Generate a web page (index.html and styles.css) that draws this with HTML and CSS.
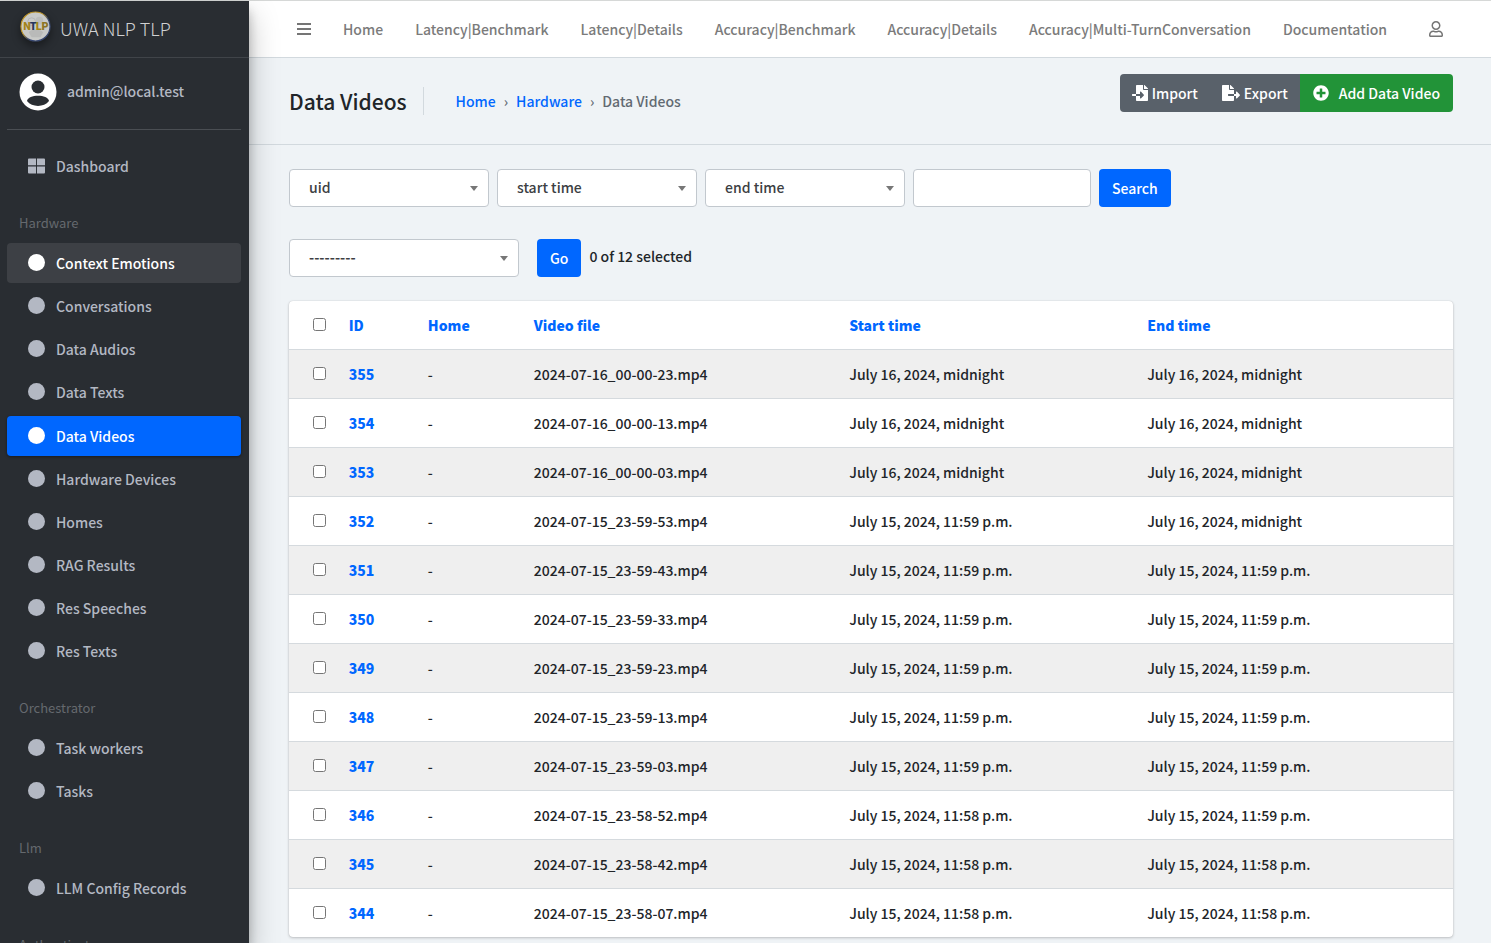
FILE: index.html
```html
<!DOCTYPE html>
<html lang="en">
<head>
<meta charset="utf-8">
<title>Data Videos | UWA NLP TLP</title>
<link rel="stylesheet" href="styles.css">
</head>
<body>
<div class="app">
  <aside class="sidebar">
    <a class="brand" href="#">
      <svg class="brand-logo" viewBox="0 0 32 32" aria-hidden="true">
        <defs><linearGradient id="ring" x1="0" y1="0" x2="1" y2="1"><stop offset="0.4" stop-color="#bd9427"/><stop offset="0.6" stop-color="#36466f"/></linearGradient></defs>
        <circle cx="16" cy="16" r="15" fill="#c9cac8" stroke="url(#ring)" stroke-width="1.2"/>
        <circle cx="12" cy="11" r="4" fill="none" stroke="#b5b6b5"/>
        <circle cx="20" cy="10" r="4" fill="#bcbdbb"/>
        <path d="M9 22c2-4 12-4 15 0l-3 5H12z" fill="#b9bab9"/>
        <g class="logo-text"><text x="3" y="20" fill="#a48418">N</text><text x="10" y="20" fill="#26365f">T</text><text x="16" y="20" fill="#a48418">L</text><text x="22" y="20" fill="#8c7423">P</text></g>
      </svg>
      <span>UWA NLP TLP</span>
    </a>
    <div class="sidebar-body">
      <div class="user-panel">
        <svg class="avatar" viewBox="0 0 38 38" aria-hidden="true">
          <circle cx="19" cy="19" r="18.500" fill="#fff"/>
          <circle cx="19" cy="14" r="6.500" fill="#292d32"/>
          <path d="M8 28c1-7 21-7 22 0-5 6.500-17 6.500-22 0z" fill="#292d32"/>
        </svg>
        <a href="#">admin@local.test</a>
      </div>
      <nav class="menu">
        <a class="item" href="#"><svg class="grid-icon" viewBox="0 0 18 16" aria-hidden="true"><path d="M1 0h7.500v7.300H0V1a1 1 0 0 1 1-1zM9.500 0H17a1 1 0 0 1 1 1v6.300H9.500zM0 8.500h8.500V16H1a1 1 0 0 1-1-1zM9.500 8.500H18V15a1 1 0 0 1-1 1H9.500z"/></svg>Dashboard</a>
        <h2 class="section">Hardware</h2>
        <a class="item hovered" href="#"><i class="dot"></i>Context Emotions</a>
        <a class="item" href="#"><i class="dot"></i>Conversations</a>
        <a class="item" href="#"><i class="dot"></i>Data Audios</a>
        <a class="item" href="#"><i class="dot"></i>Data Texts</a>
        <a class="item active" href="#"><i class="dot"></i>Data Videos</a>
        <a class="item" href="#"><i class="dot"></i>Hardware Devices</a>
        <a class="item" href="#"><i class="dot"></i>Homes</a>
        <a class="item" href="#"><i class="dot"></i>RAG Results</a>
        <a class="item" href="#"><i class="dot"></i>Res Speeches</a>
        <a class="item" href="#"><i class="dot"></i>Res Texts</a>
        <h2 class="section">Orchestrator</h2>
        <a class="item" href="#"><i class="dot"></i>Task workers</a>
        <a class="item" href="#"><i class="dot"></i>Tasks</a>
        <h2 class="section">Llm</h2>
        <a class="item" href="#"><i class="dot"></i>LLM Config Records</a>
        <h2 class="section">Authenticate</h2>
      </nav>
    </div>
  </aside>

  <div class="main">
    <header class="topbar">
      <button class="icon-button" type="button" aria-label="Toggle menu"><svg width="14" height="12" viewBox="0 0 14 12"><path d="M0 0h14v2H0zM0 5h14v2H0zM0 10h14v2H0z"/></svg></button>
      <nav class="topnav">
        <a href="#">Home</a>
        <a href="#">Latency|Benchmark</a>
        <a href="#">Latency|Details</a>
        <a href="#">Accuracy|Benchmark</a>
        <a href="#">Accuracy|Details</a>
        <a href="#">Accuracy|Multi-TurnConversation</a>
        <a href="#">Documentation</a>
      </nav>
      <button class="icon-button" type="button" aria-label="Account"><svg width="14" height="16" viewBox="0 0 448 512"><path d="M313.600 304c-28.700 0-42.500 16-89.600 16-47.100 0-60.800-16-89.600-16C60.200 304 0 364.200 0 438.400V464c0 26.500 21.500 48 48 48h352c26.500 0 48-21.500 48-48v-25.600c0-74.200-60.200-134.400-134.400-134.400zM400 464H48v-25.600c0-47.600 38.800-86.400 86.400-86.400 14.600 0 38.300 16 89.600 16 51.700 0 74.900-16 89.600-16 47.600 0 86.400 38.800 86.400 86.400V464zM224 288c79.500 0 144-64.500 144-144S303.500 0 224 0 80 64.500 80 144s64.500 144 144 144zm0-240c52.900 0 96 43.100 96 96s-43.100 96-96 96-96-43.100-96-96 43.100-96 96-96z"/></svg></button>
    </header>

    <div class="page-head">
      <h1>Data Videos</h1>
      <nav class="crumbs" aria-label="Breadcrumb"><a href="#">Home</a><span>›</span><a href="#">Hardware</a><span>›</span><span>Data Videos</span></nav>
      <div class="actions">
        <button class="btn grey" type="button"><svg width="16" height="16" viewBox="0 0 512 512"><path d="M16 288c-8.800 0-16 7.200-16 16v32c0 8.800 7.200 16 16 16h112v-64zm489-183L407.100 7c-4.500-4.500-10.600-7-17-7H384v128h128v-6.100c0-6.300-2.500-12.400-7-16.900zm-153 31V0H152c-13.300 0-24 10.700-24 24v264h128v-65.200c0-14.300 17.300-21.400 27.400-11.300L379 308c6.600 6.700 6.600 17.400 0 24l-95.700 96.400c-10.100 10.100-27.400 3-27.400-11.300V352H128v136c0 13.300 10.700 24 24 24h336c13.300 0 24-10.700 24-24V160H376c-13.200 0-24-10.800-24-24z"/></svg>Import</button>
        <button class="btn grey" type="button"><svg width="18" height="16" viewBox="0 0 576 512"><path d="M384 121.900c0-6.300-2.500-12.400-7-16.900L279.100 7c-4.500-4.500-10.600-7-17-7H256v128h128zM571 308l-95.700-96.400c-10.100-10.100-27.400-3-27.400 11.300V288h-64v64h64v65.200c0 14.300 17.300 21.400 27.400 11.300L571 332c6.600-6.600 6.600-17.400 0-24zm-379 28v-32c0-8.800 7.200-16 16-16h176V160H248c-13.200 0-24-10.800-24-24V0H24C10.700 0 0 10.700 0 24v464c0 13.300 10.700 24 24 24h336c13.300 0 24-10.700 24-24V352H208c-8.800 0-16-7.200-16-16z"/></svg>Export</button>
        <button class="btn green" type="button"><svg width="16" height="16" viewBox="0 0 512 512"><path d="M256 8C119 8 8 119 8 256s111 248 248 248 248-111 248-248S393 8 256 8zm144 276c0 6.600-5.400 12-12 12h-92v92c0 6.600-5.400 12-12 12h-56c-6.600 0-12-5.400-12-12v-92h-92c-6.600 0-12-5.400-12-12v-56c0-6.600 5.400-12 12-12h92v-92c0-6.600 5.400-12 12-12h56c6.600 0 12 5.400 12 12v92h92c6.600 0 12 5.400 12 12v56z"/></svg>Add Data Video</button>
      </div>
    </div>

    <main class="content">
      <form class="filters">
        <div class="select"><select aria-label="uid"><option>uid</option></select></div>
        <div class="select"><select aria-label="start time"><option>start time</option></select></div>
        <div class="select"><select aria-label="end time"><option>end time</option></select></div>
        <input class="search" type="text" aria-label="Search">
        <button class="btn blue" type="button">Search</button>
      </form>
      <form class="bulk">
        <div class="select wide"><select aria-label="Action"><option>---------</option></select></div>
        <button class="btn blue" type="button">Go</button>
        <span class="count">0 of 12 selected</span>
      </form>
      <div class="card">
        <table>
          <colgroup><col class="c-check"><col class="c-id"><col class="c-home"><col class="c-file"><col class="c-start"><col></colgroup>
          <thead><tr><th><input type="checkbox" aria-label="Select all"></th><th><a href="#">ID</a></th><th><a href="#">Home</a></th><th><a href="#">Video file</a></th><th><a href="#">Start time</a></th><th><a href="#">End time</a></th></tr></thead>
          <tbody>
            <tr><td><input type="checkbox" aria-label="Select 355"></td><th><a href="#">355</a></th><td>-</td><td>2024-07-16_00-00-23.mp4</td><td>July 16, 2024, midnight</td><td>July 16, 2024, midnight</td></tr>
            <tr><td><input type="checkbox" aria-label="Select 354"></td><th><a href="#">354</a></th><td>-</td><td>2024-07-16_00-00-13.mp4</td><td>July 16, 2024, midnight</td><td>July 16, 2024, midnight</td></tr>
            <tr><td><input type="checkbox" aria-label="Select 353"></td><th><a href="#">353</a></th><td>-</td><td>2024-07-16_00-00-03.mp4</td><td>July 16, 2024, midnight</td><td>July 16, 2024, midnight</td></tr>
            <tr><td><input type="checkbox" aria-label="Select 352"></td><th><a href="#">352</a></th><td>-</td><td>2024-07-15_23-59-53.mp4</td><td>July 15, 2024, 11:59 p.m.</td><td>July 16, 2024, midnight</td></tr>
            <tr><td><input type="checkbox" aria-label="Select 351"></td><th><a href="#">351</a></th><td>-</td><td>2024-07-15_23-59-43.mp4</td><td>July 15, 2024, 11:59 p.m.</td><td>July 15, 2024, 11:59 p.m.</td></tr>
            <tr><td><input type="checkbox" aria-label="Select 350"></td><th><a href="#">350</a></th><td>-</td><td>2024-07-15_23-59-33.mp4</td><td>July 15, 2024, 11:59 p.m.</td><td>July 15, 2024, 11:59 p.m.</td></tr>
            <tr><td><input type="checkbox" aria-label="Select 349"></td><th><a href="#">349</a></th><td>-</td><td>2024-07-15_23-59-23.mp4</td><td>July 15, 2024, 11:59 p.m.</td><td>July 15, 2024, 11:59 p.m.</td></tr>
            <tr><td><input type="checkbox" aria-label="Select 348"></td><th><a href="#">348</a></th><td>-</td><td>2024-07-15_23-59-13.mp4</td><td>July 15, 2024, 11:59 p.m.</td><td>July 15, 2024, 11:59 p.m.</td></tr>
            <tr><td><input type="checkbox" aria-label="Select 347"></td><th><a href="#">347</a></th><td>-</td><td>2024-07-15_23-59-03.mp4</td><td>July 15, 2024, 11:59 p.m.</td><td>July 15, 2024, 11:59 p.m.</td></tr>
            <tr><td><input type="checkbox" aria-label="Select 346"></td><th><a href="#">346</a></th><td>-</td><td>2024-07-15_23-58-52.mp4</td><td>July 15, 2024, 11:58 p.m.</td><td>July 15, 2024, 11:59 p.m.</td></tr>
            <tr><td><input type="checkbox" aria-label="Select 345"></td><th><a href="#">345</a></th><td>-</td><td>2024-07-15_23-58-42.mp4</td><td>July 15, 2024, 11:58 p.m.</td><td>July 15, 2024, 11:58 p.m.</td></tr>
            <tr><td><input type="checkbox" aria-label="Select 344"></td><th><a href="#">344</a></th><td>-</td><td>2024-07-15_23-58-07.mp4</td><td>July 15, 2024, 11:58 p.m.</td><td>July 15, 2024, 11:58 p.m.</td></tr>
          </tbody>
        </table>
      </div>
    </main>
  </div>
</div>
</body>
</html>
```
FILE: styles.css
```css
* { box-sizing: border-box; }
body {
  margin: 0;
  background: #eff3f6;
  color: #212529;
  font: 500 14px/24px "Noto Sans CJK SC", "Open Sans", sans-serif;
}
a { color: #0067ff; text-decoration: none; }
button, input, select { font: inherit; }
svg { display: block; fill: currentColor; flex: none; }

.app {
  display: flex;
  height: 100vh;
  border-top: 1px solid #d6d8d7;
}

.sidebar {
  flex: none;
  width: 249px;
  z-index: 2;
  background: #292d32;
  box-shadow: 0 14px 28px rgba(0, 0, 0, .25), 0 10px 10px rgba(0, 0, 0, .22);
  overflow: hidden;
}
.brand {
  display: flex;
  align-items: center;
  gap: 9px;
  height: 57px;
  padding: 0 20px 2px;
  border-bottom: 1px solid #404449;
  color: #d0d1d2;
  font-size: 18px;
  font-weight: 300;
}
.brand-logo { width: 31px; height: 31px; margin-bottom: 3px; border-radius: 50%; box-shadow: 0 4px 8px rgba(0, 0, 0, .4); }
.logo-text { font: 900 11px "Noto Sans CJK SC", sans-serif; }
.sidebar-body { padding: 0 8px 0 7px; }
.user-panel {
  display: flex;
  align-items: center;
  gap: 10px;
  height: 72px;
  padding: 0 12px 3px;
  border-bottom: 1px solid #4a4e53;
}
.user-panel a, .item { color: #b3b8c3; }
.user-panel a { padding-bottom: 2px; }
.avatar { width: 38px; height: 38px; }
.menu { display: flex; flex-direction: column; padding-top: 16px; }
.item {
  display: flex;
  align-items: center;
  gap: 11px;
  height: 40px;
  padding: 0 21px;
  border-radius: 4px;
}
.item + .item { margin-top: 3px; }
.grid-icon { width: 17px; height: 16px; }
.dot { width: 17px; height: 17px; border-radius: 50%; background: currentColor; margin-bottom: 1px; }
.item.hovered { background: #3d4045; color: #fff; }
.item.active { margin-top: 4px; background: #0067ff; color: #fff; box-shadow: 0 1px 3px rgba(0, 0, 0, .4); }
.section {
  margin: 0;
  padding: 27px 12px 10px;
  color: #65696e;
  font-size: 13px;
  line-height: 20px;
  font-weight: 400;
}

.main { flex: 1; min-width: 0; display: flex; flex-direction: column; }
.topbar {
  display: flex;
  align-items: center;
  height: 57px;
  padding: 0 48px;
  background: #fff;
  border-bottom: 1px solid #d2d9de;
  color: #7b7b7b;
}
.icon-button { padding: 0; border: 0; background: none; color: #757575; }
.topnav { display: flex; flex: 1; gap: 32px; padding-left: 32px; white-space: nowrap; }
.topnav a { color: inherit; }

.page-head {
  display: flex;
  align-items: center;
  height: 87px;
  padding: 0 38px 1px 40px;
  border-bottom: 1px solid #d2d9de;
}
.page-head h1 {
  margin: 0;
  padding-right: 16px;
  border-right: 1px solid #d2d9de;
  font-size: 21px;
  line-height: 28px;
  font-weight: 500;
}
.crumbs { display: flex; gap: 8px; padding-left: 32px; color: #626a72; }
.actions { display: flex; margin: 0 0 15px auto; border-radius: 4px; overflow: hidden; }
.btn {
  display: flex;
  align-items: center;
  gap: 4px;
  height: 38px;
  padding: 0 12px;
  border: 0;
  border-radius: 4px;
  color: #fff;
}
.actions .btn { border-radius: 0; }
.grey { background: #59616a; }
.green.btn { gap: 10px; padding: 0 13px; background: #229338; }
.blue { padding: 0 13px; background: #0067ff; }

.content { padding: 24px 38px 0 40px; }
.filters, .bulk { display: flex; gap: 8px; }
.bulk { margin-top: 32px; }
.select { position: relative; width: 200px; }
.select.wide { width: 230px; margin-right: 10px; font-weight: 700; }
.select::after {
  content: "";
  position: absolute;
  right: 11px;
  top: 17px;
  border: 4px solid transparent;
  border-top: 5px solid #777;
  border-bottom: 0;
  pointer-events: none;
}
select, .search {
  width: 100%;
  height: 38px;
  padding: 0 19px 2px;
  border: 1px solid #c2c8ce;
  border-radius: 4px;
  background: #fff;
  color: #3c4043;
  appearance: none;
}
.search { width: 178px; }
.count { line-height: 34px; }

.card {
  margin-top: 24px;
  border-radius: 4px;
  background: #fff;
  box-shadow: 0 0 1px rgba(0, 0, 0, .2), 0 1px 3px rgba(0, 0, 0, .2);
  overflow: hidden;
}
table { width: 100%; table-layout: fixed; border-collapse: collapse; }
.c-check { width: 4.100%; }
.c-id { width: 6.800%; }
.c-home { width: 9.100%; }
.c-file { width: 27.100%; }
.c-start { width: 25.600%; }
tr { height: 49px; }
thead tr { height: 48px; }
th, td { padding: 0 12px; text-align: left; }
th { font-weight: 900; }
th:first-child, td:first-child { padding: 0 0 0 24px; }
tbody tr { border-top: 1px solid #d5dade; }
tbody tr:nth-child(odd) { background: #efefef; }
input[type="checkbox"] { display: block; width: 13px; height: 13px; margin: 0; }
```
